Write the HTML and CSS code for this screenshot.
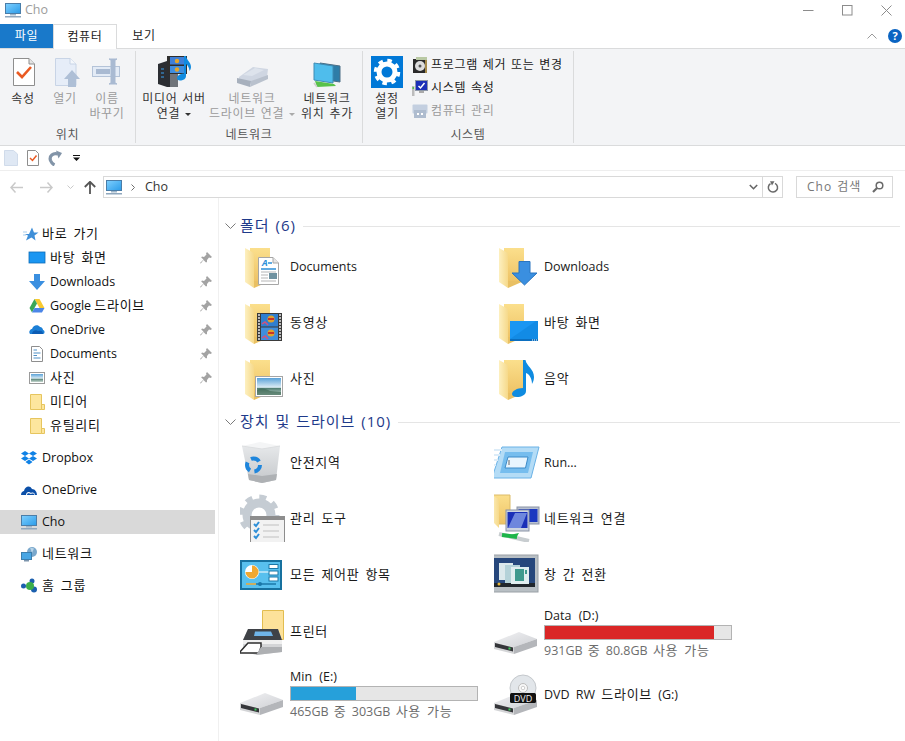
FILE: index.html
```html
<!DOCTYPE html>
<html lang="ko">
<head>
<meta charset="utf-8">
<title>Cho</title>
<link rel="stylesheet" href="styles.css">
</head>
<body>
<svg class="defs" aria-hidden="true">
  <defs>
    <linearGradient id="gFolder" x1="0" y1="0" x2="0" y2="1"><stop offset="0" stop-color="#fbdf8c"/><stop offset="1" stop-color="#eec366"/></linearGradient>
    <linearGradient id="gFlap" x1="0" y1="0" x2="1" y2="0"><stop offset="0" stop-color="#fdf0c0"/><stop offset="1" stop-color="#f6d98a"/></linearGradient>
    <linearGradient id="gScreen" x1="0" y1="0" x2="1" y2="1"><stop offset="0" stop-color="#7fd0ff"/><stop offset="1" stop-color="#2a9be8"/></linearGradient>
    <linearGradient id="gHdd" x1="0" y1="0" x2="1" y2="1"><stop offset="0" stop-color="#f2f2f4"/><stop offset="1" stop-color="#cfd1d5"/></linearGradient>
    <linearGradient id="gBin" x1="0" y1="0" x2="0" y2="1"><stop offset="0" stop-color="#e6e8ea"/><stop offset="1" stop-color="#c4c7ca"/></linearGradient>
    <linearGradient id="gSky" x1="0" y1="0" x2="0" y2="1"><stop offset="0" stop-color="#5aa2d8"/><stop offset=".55" stop-color="#dcecf4"/><stop offset=".6" stop-color="#4f7d70"/><stop offset="1" stop-color="#c8d8d0"/></linearGradient>

    <symbol id="pc" viewBox="0 0 16 16"><rect x="0.5" y="1.5" width="15" height="10" fill="url(#gScreen)" stroke="#4a7da8"/><rect x="5" y="12" width="6" height="1.5" fill="#9fb6c9"/><rect x="0" y="14" width="16" height="1.5" fill="#8fa7bd"/></symbol>

    <symbol id="bigfolder" viewBox="0 0 48 48">
      <path d="M10 6H30V39H10Z" fill="url(#gFolder)"/>
      <path d="M5 6L14 11V46L5 40Z" fill="url(#gFlap)"/>
      <path d="M14 46L30 39H14Z" fill="#e9c063"/>
    </symbol>

    <symbol id="ovDoc" viewBox="0 0 48 48">
      <path d="M18.500 15.500H33L38.500 21V42.500H18.500Z" fill="#fff" stroke="#a6a6a6"/><path d="M33 15.500V21H38.500" fill="#e6e6e6" stroke="#a6a6a6"/>
      <text class="ovtext" x="22" y="24">A</text>
      <path d="M28 21H32M21 27H36" stroke="#2d8fd8" stroke-width="1.500"/>
      <path d="M21 30H36M21 33H28M21 36H28M21 39H36" stroke="#b5b5b5"/>
      <rect x="29" y="31" width="8" height="6" fill="#6f92a0"/>
    </symbol>
    <symbol id="ovFilm" viewBox="0 0 48 48">
      <rect x="17" y="15" width="25" height="28" fill="#3b3b3b"/>
      <rect x="21" y="16" width="17" height="12.500" fill="#2f7fd0"/><rect x="21" y="29.500" width="17" height="12.500" fill="#3f8edc"/>
      <circle cx="31" cy="21" r="3.500" fill="#e0a22b"/><path d="M28 21h6" stroke="#c8322a" stroke-width="2"/><circle cx="31" cy="35" r="3.500" fill="#e0a22b"/><path d="M28 35h6" stroke="#c8322a" stroke-width="2"/>
      <path d="M22 26l3-2 3 3M22 40l3-2 3 3" stroke="#d8507a" stroke-width="1.500" fill="none"/>
      <path d="M18 17h2M18 20h2M18 23h2M18 26h2M18 29h2M18 32h2M18 35h2M18 38h2M18 41h2M39 17h2M39 20h2M39 23h2M39 26h2M39 29h2M39 32h2M39 35h2M39 38h2M39 41h2" stroke="#e8e8e8" stroke-width="1.500"/>
    </symbol>
    <symbol id="ovPhoto" viewBox="0 0 48 48">
      <rect x="15.500" y="22.500" width="27" height="20" fill="#fff" stroke="#a5a5a5"/><rect x="17" y="24" width="24" height="17" fill="url(#gSky)"/><path d="M17 36c5-3 9-1 13 1l11 1v3H17Z" fill="#3f6a55" opacity=".7"/>
    </symbol>
    <symbol id="ovDown" viewBox="0 0 48 48"><path d="M25 19.500H36V31H43L30.500 43 18 31H25Z" fill="#3a8fe0" stroke="#2a75c0"/></symbol>
    <symbol id="ovDesk" viewBox="0 0 48 48"><rect x="16" y="23" width="28" height="20" fill="#1a96f2"/><path d="M16 41L42 23H44V43H16Z" fill="#0d84dc" opacity=".6"/><rect x="16" y="41" width="28" height="2" fill="#0b6fc0"/><path d="M38 42h1M40 42h1M42 42h1" stroke="#fff"/></symbol>
    <symbol id="ovMusic" viewBox="0 0 48 48"><path d="M29 6h2.500c1 6 8.500 9 8.500 17 0 3-1 5-2 7 0-6-3-10-6-11V37c0 4-5 6-9 6-3 0-5-1-5-3 0-3 5-6 11-6Z" fill="#0f8be0"/></symbol>

    <symbol id="bin" viewBox="0 0 48 48">
      <path d="M2 8L9 42 22 45 36 42 40 8Z" fill="url(#gBin)"/>
      <path d="M2 8L20 4 40 8 22 11Z" fill="#f4f5f6"/>
      <path d="M2 8L22 11 40 8" fill="none" stroke="#dcdee0"/>
      <path d="M8 36L22 38 37 36 36 42 22 45 9 42Z" fill="#aeb1b4"/>
      <circle cx="13.500" cy="27" r="6.500" fill="none" stroke="#1f86dc" stroke-width="4" stroke-dasharray="9 4.600"/>
    </symbol>
    <symbol id="admin" viewBox="0 0 48 48">
      <circle cx="19" cy="21" r="12" fill="none" stroke="#c5ccd3" stroke-width="9"/><circle cx="19" cy="21" r="18" fill="none" stroke="#c5ccd3" stroke-width="5" stroke-dasharray="7 7.100"/>
      <rect x="10.500" y="16.500" width="34" height="26" fill="#f2f2f2" stroke="#8d8d8d" transform="translate(0 6)"/>
      <rect x="10" y="22" width="35" height="4" fill="#8d8d8d"/>
      <path d="M14 31l2 2 3-4M14 37l2 2 3-4M14 43l2 2 3-4" transform="translate(0 -1)" stroke="#2d8fd8" stroke-width="2" fill="none"/>
      <path d="M23 31H39M23 37H39M23 43H39" stroke="#c0c0c0"/>
    </symbol>
    <symbol id="cpl" viewBox="0 0 48 48">
      <rect x="0" y="10" width="42" height="30" fill="#17719f"/><rect x="2" y="12" width="38" height="26" fill="#58c0ee"/>
      <circle cx="12" cy="22" r="7" fill="#fff"/><path d="M12 22V15.500a6.500 6.500 0 1 1-6.500 6.500Z" fill="#f0a830"/>
      <path d="M19 22H29" stroke="#fff"/>
      <rect x="29" y="14.500" width="9" height="4" fill="#fff" stroke="#1b78a8"/><rect x="29" y="21" width="9" height="4" fill="#fff" stroke="#1b78a8"/><rect x="29" y="27" width="9" height="4" fill="#fff" stroke="#1b78a8"/>
      <path d="M6 34H16" stroke="#f0a830" stroke-width="1.500"/><path d="M16 34H36" stroke="#1b78a8" stroke-width="1.500"/><circle cx="20" cy="34" r="2" fill="#1b78a8"/>
    </symbol>
    <symbol id="printer" viewBox="0 0 48 48">
      <path d="M22.500 1.500H43.500V30.500H22.500Z" fill="#fde29a" stroke="#e2bd50"/>
      <path d="M3 31L8 20H38L42 31V43L16 46 3 42Z" fill="#d4d5d7"/>
      <path d="M3 31L8 20H38L42 31Z" fill="#3f4247"/>
      <path d="M15 22.500H31L33 27H14Z" fill="#6fb4e8"/>
      <path d="M3 31H42V35H3Z" fill="#f0f0f0"/>
      <path d="M8 34H21V38L19 44H-1Z" fill="#fff" stroke="#2e2e2e" stroke-width="1.500"/>
      <path d="M21 38H42V43L16 46Z" fill="#aeb0b3"/>
    </symbol>
    <symbol id="hdd" viewBox="0 0 48 48">
      <path d="M0 33L25 23 43 30 20 38Z" fill="url(#gHdd)"/>
      <path d="M20 38L43 30V37L20 45Z" fill="#b4b6ba"/>
      <path d="M0 33L20 38V45L0 40Z" fill="#d4d5d7"/>
      <path d="M1 34L19 38.500V42.500L1 38Z" fill="#35363a"/>
      <rect x="14.500" y="38.500" width="2" height="2" fill="#3ecf5e"/>
    </symbol>
    <symbol id="run" viewBox="0 0 48 48">
      <path d="M8 9H45L37 40H-2Z" fill="#b4dcf6" stroke="#6ab2e6"/>
      <path d="M11 14H39L34 35H6Z" fill="#76bdee"/><path d="M14 19H34L31.500 30H11Z" fill="#e8f5fe" stroke="#3c8bc8"/>
      <path d="M-4 12H8M-4 17H6M-4 22H4M-4 27H2" stroke="#dcecf8" stroke-width="2"/>
      <path d="M15 22v5" stroke="#666"/>
    </symbol>
    <symbol id="netconn" viewBox="0 0 48 48">
      <g transform="translate(-3 0)">
      <path d="M0 1H19V30H8L0 24Z" fill="url(#gFolder)" stroke="#dcbb68"/><path d="M0 1L8 5V34L0 26Z" fill="url(#gFlap)"/>
      <rect x="26" y="13" width="22" height="17" fill="#b8c0d0" stroke="#8a93a5"/><rect x="27.500" y="15" width="19" height="13" fill="#1b38c0"/>
      <rect x="15" y="16" width="23" height="21" fill="#ccd4e0" stroke="#8a93a5"/><rect x="16.500" y="18" width="20" height="16" fill="#1a30b8"/><path d="M17 34L24 19H36L30 34Z" fill="#8ba4ea" opacity=".75"/>
      <path d="M8 40L38 47" stroke="#c8cdd0" stroke-width="4"/><path d="M14 42L28 39 25 44Z" fill="#1db54a"/><path d="M11 41L26 43" stroke="#1db54a" stroke-width="4"/>
      </g>
    </symbol>
    <symbol id="flip" viewBox="0 0 48 48">
      <g transform="translate(-3 0)">
      <rect x="0" y="5" width="47" height="37" fill="#b8bfc4" stroke="#9aa0a6"/><rect x="3" y="8" width="41" height="29" fill="#26477c"/>
      <rect x="3" y="33" width="41" height="4" fill="#20262c"/>
      <rect x="8" y="13" width="14" height="17" fill="#dce9ec"/><rect x="14" y="15" width="15" height="18" fill="#b4d2d8"/><rect x="20" y="17" width="18" height="17" fill="#e0eef0"/><rect x="24" y="19" width="9" height="12" fill="#3f9a8e"/><rect x="34" y="20" width="2" height="4" fill="#3f9a8e"/>
      <circle cx="8" cy="34" r="1.500" fill="#e8b83a"/>
      </g>
    </symbol>
    <symbol id="dvd" viewBox="0 0 48 48">
      <use href="#hdd" width="48" height="48"/>
      <circle cx="29" cy="18" r="13" fill="#e2e6ea" stroke="#c4c8cc"/><circle cx="29" cy="18" r="4.500" fill="#f8f8f8" stroke="#bcbcbc"/><circle cx="29" cy="18" r="1.800" fill="#fff" stroke="#ccc"/>
      <rect x="16" y="23" width="26" height="10" rx="1.500" fill="#111"/>
      <text class="dvdtext" x="29" y="31.500" text-anchor="middle">DVD</text>
    </symbol>
    <symbol id="pin" viewBox="0 0 12 12"><path d="M7 0L12 5 10.500 6 9 5.500 7 8 7 10 6 10.500 3.500 8 .8 11.500 0 11 3.500 7.500 1.200 5.500 2 4.500 4 5 6.500 2.500 6 1.500Z" fill="#a3a3a3"/></symbol>
    <symbol id="minifolder" viewBox="0 0 16 16"><path d="M1.500.5H12.500V15.500H1.500Z" fill="#fde69e" stroke="#e6c55e"/><path d="M12.500 10.500H15.500V15.500H12.500Z" fill="#fde69e" stroke="#e6c55e"/></symbol>
  </defs>
</svg>

<header class="titlebar">
  <svg class="ic16" viewBox="0 0 16 16"><use href="#pc"/></svg>
  <span class="title">Cho</span>
  <div class="winctl">
    <svg class="winbtn" viewBox="0 0 11 11"><path d="M0 5.500H10.500" stroke="#8c8c8c"/></svg>
    <svg class="winbtn" viewBox="0 0 11 11"><rect x=".5" y=".5" width="9.500" height="9.500" fill="none" stroke="#8c8c8c"/></svg>
    <svg class="winbtn" viewBox="0 0 11 11"><path d="M.5 .5L10.500 10.500M10.500 .5L.5 10.500" stroke="#8c8c8c"/></svg>
  </div>
</header>

<nav class="tabs">
  <span class="tab tab-file ko">파일</span>
  <span class="tab tab-on ko">컴퓨터</span>
  <span class="tab tab-off ko">보기</span>
  <div class="tabs-right">
    <svg class="chev-up" viewBox="0 0 10 6"><path d="M.5 5.500L5 1 9.500 5.500" fill="none" stroke="#9a9a9a"/></svg>
    <span class="help">?</span>
  </div>
</nav>

<section class="ribbon">
  <div class="group g-loc">
    <div class="btns">
      <div class="rbtn w46">
        <svg class="ric" viewBox="0 0 32 32"><path d="M6.500 2.500H22L27.500 8V29.500H6.500Z" fill="#fff" stroke="#8e8e8e"/><path d="M22 2.500V8H27.500" fill="#e4e4e4" stroke="#8e8e8e"/><path d="M10 16L15 21 24 11" fill="none" stroke="#ea5a22" stroke-width="2.600"/></svg>
        <span class="ko">속성</span>
      </div>
      <div class="rbtn w38 off">
        <svg class="ric" viewBox="0 0 32 32"><path d="M6.500 2.500H21L27 8V29.500H6.500Z" fill="#e6edf8" stroke="#c8d4e6"/><path d="M21 2.500V8H27" fill="#f4f7fb" stroke="#c8d4e6"/><path d="M23 14L31 23H27V31H19V23H15Z" fill="#aebfd6"/></svg>
        <span class="ko">열기</span>
      </div>
      <div class="rbtn w46 off">
        <svg class="ric" viewBox="0 0 32 32"><rect x="1.500" y="10.500" width="27" height="10" fill="#e3ebf6" stroke="#b4c3d8"/><rect x="5" y="13" width="14" height="5" fill="#a9bad2"/><path d="M18 3h8l-2 1v23l2 1h-8l2-1V4Z" fill="#a9bad2" stroke="#a9bad2"/></svg>
        <span class="ko">이름<br>바꾸기</span>
      </div>
    </div>
    <div class="glabel ko">위치</div>
  </div>
  <div class="group g-net">
    <div class="btns">
      <div class="rbtn w76">
        <svg class="ric" viewBox="0 0 32 32">
          <path d="M0 8L9 5 19 7V31L9 31 0 28Z" fill="#2b2e33"/><path d="M12 8L20 7V31L12 31Z" fill="#70747a"/><path d="M3 13h3M3 17h3M3 21h3" stroke="#3aa0f0"/>
          <rect x="9" y="0" width="20" height="18" fill="#2e2e2e"/><rect x="12" y="1" width="14" height="7.500" fill="#3f7fd8"/><rect x="12" y="10" width="14" height="7" fill="#3f8ee0"/><circle cx="19" cy="5" r="2.200" fill="#e5a52a"/><circle cx="19" cy="13.500" r="2.200" fill="#e5a52a"/>
          <path d="M26 0h2c.5 4 5 6 5 11 0 2-1 3-1.500 4 0-3-2-6-3.500-7V20c0 3-3 4.500-6 4.500-2 0-3-1-3-2.500 0-2.500 4-4.500 7-4.500Z" fill="#0f8be0"/>
        </svg>
        <span class="ko">미디어 서버<br>연결 <i class="caret"></i></span>
      </div>
      <div class="rbtn w80 off">
        <svg class="ric" viewBox="0 0 32 32"><path d="M3 21L17 11 32 13 31 21 15 28 3 25Z" fill="#cfd6e2"/><path d="M1 22L15 25 14 31 1 27Z" fill="#a7b0bd"/><path d="M15 25L32 19V23L14 31Z" fill="#b9c1cd"/><path d="M7 19L19 12 28 14 16 20Z" fill="#dde3ec"/></svg>
        <span class="ko">네트워크<br>드라이브 연결 <i class="caret caret-off"></i></span>
      </div>
      <div class="rbtn w70">
        <svg class="ric" viewBox="0 0 32 32"><path d="M9 7L29 10V26L9 23Z" fill="#2e7da8" stroke="#4c6f86"/><path d="M3 7L22 10V27L3 24Z" fill="#4fbdec" stroke="#3f8cb4"/><path d="M4 25L23 28 25 30 6 31Z" fill="#58c24a"/><path d="M3 27L6 31" stroke="#d0d0d0" stroke-width="1.500"/></svg>
        <span class="ko">네트워크<br>위치 추가</span>
      </div>
    </div>
    <div class="glabel ko">네트워크</div>
  </div>
  <div class="group g-sys">
    <div class="btns">
      <div class="rbtn w48">
        <svg class="ric" viewBox="0 0 32 32"><rect width="32" height="32" fill="#0078d7"/><circle cx="16" cy="16" r="8" fill="none" stroke="#fff" stroke-width="5"/><circle cx="16" cy="16" r="11.500" fill="none" stroke="#fff" stroke-width="3.500" stroke-dasharray="4.500 4.530"/></svg>
        <span class="ko">설정<br>열기</span>
      </div>
      <div class="smallist">
        <div class="sitem">
          <svg class="ic16" viewBox="0 0 16 16"><rect x="1" y="2" width="14" height="14" fill="#2a2a2a"/><rect x="4" y="0" width="11" height="3" fill="#b9c9a4"/><circle cx="8" cy="9" r="5" fill="#ddd"/><circle cx="8" cy="9" r="1.500" fill="#555"/><rect x="13" y="3" width="2" height="13" fill="#a58a4c"/></svg>
          <span class="ko">프로그램 제거 또는 변경</span>
        </div>
        <div class="sitem">
          <svg class="ic16" viewBox="0 0 16 16"><rect x="3.500" y=".5" width="12" height="10" fill="#1a2fb8" stroke="#8d97a8"/><path d="M6.500 6L8.500 8 12.500 3" fill="none" stroke="#fff" stroke-width="1.500"/><rect x="7" y="11" width="5" height="2" fill="#aaa"/><rect x="0" y="6" width="2.500" height="10" fill="#bcbcbc"/><rect x=".5" y="7" width="1.500" height="2" fill="#54c24a"/></svg>
          <span class="ko">시스템 속성</span>
        </div>
        <div class="sitem off">
          <svg class="ic16" viewBox="0 0 16 16"><rect x=".5" y="1.500" width="15" height="9" rx="1" fill="#c3cfe0"/><rect x="2" y="7" width="12" height="8" fill="#aebccf"/><rect x="5" y="10" width="2" height="2" fill="#fff"/><rect x="9" y="10" width="2" height="2" fill="#fff"/></svg>
          <span class="ko">컴퓨터 관리</span>
        </div>
      </div>
    </div>
    <div class="glabel ko">시스템</div>
  </div>
</section>

<div class="qat">
  <svg class="ic14" viewBox="0 0 14 16"><path d="M.5 .5H9.500L13.500 4V15.500H.5Z" fill="#dfe8f4" stroke="#d0dbea"/></svg>
  <svg class="ic14" viewBox="0 0 14 16"><path d="M1.500 .5H9.500L12.500 3.500V15.500H1.500Z" fill="#fff" stroke="#8e8e8e"/><path d="M4 8L6.500 10.500 10.500 5.500" fill="none" stroke="#ea5a22" stroke-width="1.500"/></svg>
  <svg class="ic14" viewBox="0 0 14 16"><path d="M10 4C5 2.500 1 6 2.500 10.500 3.300 12.500 4.500 14 6.500 15" fill="none" stroke="#8294a8" stroke-width="3.200"/><path d="M8 .5L14 3 10.500 8.500Z" fill="#8294a8"/></svg>
  <svg class="qdrop" viewBox="0 0 7 6"><path d="M0 0H7V1H0ZM0 2.500H7L3.500 6Z" fill="#111"/></svg>
</div>

<div class="navbar">
  <svg class="nav-arrow" viewBox="0 0 13 11"><path d="M5.500 .5L1 5.500 5.500 10.500M1 5.500H13" fill="none" stroke="#c9c9c9" stroke-width="1.500"/></svg>
  <svg class="nav-arrow" viewBox="0 0 13 11"><path d="M7.500 .5L12 5.500 7.500 10.500M12 5.500H0" fill="none" stroke="#c9c9c9" stroke-width="1.500"/></svg>
  <svg class="nav-down" viewBox="0 0 7 4"><path d="M.5 .5L3.500 3.500 6.500 .5" fill="none" stroke="#c9c9c9"/></svg>
  <svg class="nav-up" viewBox="0 0 12 13"><path d="M.8 6L6 .8 11.200 6M6 1V13" fill="none" stroke="#555" stroke-width="1.800"/></svg>
  <div class="addr">
    <svg class="ic16" viewBox="0 0 16 16"><use href="#pc"/></svg>
    <svg class="crumb" viewBox="0 0 4 7"><path d="M.5 .5L3.500 3.500 .5 6.500" fill="none" stroke="#6e6e6e"/></svg>
    <span class="addr-text">Cho</span>
    <svg class="addr-drop" viewBox="0 0 9 6"><path d="M.8 1L4.500 4.700 8.200 1" fill="none" stroke="#666" stroke-width="1.600"/></svg>
    <span class="addr-refresh">
      <svg class="ic10" viewBox="0 0 12 12"><path d="M3.500 2.600A4.600 4.600 0 1 0 8 2.400" fill="none" stroke="#6a6a6a" stroke-width="1.500"/><path d="M3 .2H7.500L5 4.500Z" fill="#6a6a6a"/></svg>
    </span>
  </div>
  <div class="search">
    <span class="search-text ko">Cho 검색</span>
    <svg class="ic12" viewBox="0 0 12 12"><circle cx="7.500" cy="4.500" r="3.300" fill="none" stroke="#6a6a6a" stroke-width="1.500"/><path d="M5 7L1 11" stroke="#6a6a6a" stroke-width="2.200"/></svg>
  </div>
</div>

<main class="main">
  <aside class="side">
    <ul class="tree">
      <li class="head"><svg class="ic16" viewBox="0 0 16 16"><path d="M9 1.500L11 6.500H15.500L11.500 9.500 12.500 14.500 8.500 11.500 3 14.500 5 9.500 1.500 8H6Z" fill="#3f8fd8"/><path d="M0 6H4M0 9H3" stroke="#a8cdec"/></svg><span class="ko lift">바로 가기</span></li>
      <li class="sub"><svg class="ic16" viewBox="0 0 16 16"><rect y="2" width="16" height="11" fill="#1a96f2" stroke="#0e6db8" stroke-width=".8"/></svg><span class="ko lift">바탕 화면</span><svg class="ic12 pin" viewBox="0 0 12 12"><use href="#pin"/></svg></li>
      <li class="sub"><svg class="ic16" viewBox="0 0 16 16"><path d="M5 0H11V7H16L8 16 0 7H5Z" fill="#3a8fe0"/></svg>Downloads<svg class="ic12 pin" viewBox="0 0 12 12"><use href="#pin"/></svg></li>
      <li class="sub"><svg class="ic16" viewBox="0 0 16 16"><path d="M5.500 1H10.500L15.500 10H10.500Z" fill="#f8c930"/><path d="M5.500 1L.5 10 3 14.500 8 5.500Z" fill="#3aa757"/><path d="M3 14.500H13L15.500 10H5.500Z" fill="#4b86e8"/></svg><span class="lift">Google <span class="ko">드라이브</span></span><svg class="ic12 pin" viewBox="0 0 12 12"><use href="#pin"/></svg></li>
      <li class="sub"><svg class="ic16" viewBox="0 0 16 16"><path d="M1 12C-1 9 2 7 3 7 4 3 9 2 11 5 13 5 14 7 14 8 16 8 16 12 14 12Z" fill="#1b7fd6"/><path d="M3 12C3 9 7 7 9 9 12 8 14 9 14 12Z" fill="#0c5cb4"/></svg>OneDrive<svg class="ic12 pin" viewBox="0 0 12 12"><use href="#pin"/></svg></li>
      <li class="sub"><svg class="ic16" viewBox="0 0 16 16"><path d="M2.500 .5H10.500L13.500 3.500V15.500H2.500Z" fill="#fff" stroke="#8e8e8e"/><path d="M4.500 4H8M4.500 7H11.500M4.500 9.500H8M4.500 12H11.500" stroke="#4f8fc4"/></svg>Documents<svg class="ic12 pin" viewBox="0 0 12 12"><use href="#pin"/></svg></li>
      <li class="sub"><svg class="ic16" viewBox="0 0 16 16"><rect x=".5" y="2.500" width="15" height="11" fill="#fff" stroke="#9a9a9a"/><rect x="2" y="4" width="12" height="8" fill="url(#gSky)"/></svg><span class="ko lift">사진</span><svg class="ic12 pin" viewBox="0 0 12 12"><use href="#pin"/></svg></li>
      <li class="sub"><svg class="ic16" viewBox="0 0 16 16"><use href="#minifolder"/></svg><span class="ko lift">미디어</span></li>
      <li class="sub"><svg class="ic16" viewBox="0 0 16 16"><use href="#minifolder"/></svg><span class="ko lift">유틸리티</span></li>
      <li class="head gap"><svg class="ic16" viewBox="0 0 16 16"><path d="M4 1L8 3.500 4 6 0 3.500ZM12 1L16 3.500 12 6 8 3.500ZM4 6L8 8.500 4 11 0 8.500ZM12 6L16 8.500 12 11 8 8.500ZM8 9.500L11.500 12 8 14.500 4.500 12Z" fill="#0f82e6"/></svg>Dropbox</li>
      <li class="head"><svg class="ic16" viewBox="0 0 16 16"><path d="M0 13C0 10 2 9 3 9 4 4 9 3 11 7 14 7 16 10 16 13Z" fill="#0b4fa8"/><path d="M5 13C5 10 8 9 10 11 12 10 14 11 14 13Z" fill="#fff"/><path d="M6 13C6 11 8 10.500 10 12 12 11 13.500 12 13.500 13Z" fill="#0b4fa8"/></svg>OneDrive</li>
      <li class="head selected"><svg class="ic16" viewBox="0 0 16 16"><use href="#pc"/></svg>Cho</li>
      <li class="head"><svg class="ic16" viewBox="0 0 16 16"><circle cx="11" cy="6" r="5" fill="#7aa8cc"/><path d="M9 1.500L13 2.500 11 7Z" fill="#b9d4e8"/><rect x=".5" y="6.500" width="10" height="7" fill="#48a6e4" stroke="#3c7fae"/><rect x="3" y="14" width="5" height="1.500" fill="#7d95ad"/></svg><span class="ko lift">네트워크</span></li>
      <li class="head"><svg class="ic16" viewBox="0 0 16 16"><circle cx="2.500" cy="8" r="2.500" fill="#1b5fae"/><circle cx="11" cy="3" r="2.500" fill="#1b5fae"/><circle cx="13" cy="11.500" r="3" fill="#1b5fae"/><circle cx="9" cy="8" r="4" fill="#3cae4a"/></svg><span class="ko lift">홈 그룹</span></li>
    </ul>
  </aside>

  <div class="content">
    <h2 class="sec"><svg class="sec-chev" viewBox="0 0 11 6"><path d="M.5 .5L5.500 5.500 10.500 .5" fill="none" stroke="#7a7a7a"/></svg><span class="sec-title">폴더 (6)</span><i class="rule"></i></h2>
    <div class="tiles">
      <div class="tile"><svg class="tic" viewBox="0 0 48 48"><use href="#bigfolder"/><use href="#ovDoc"/></svg><span>Documents</span></div>
      <div class="tile"><svg class="tic" viewBox="0 0 48 48"><use href="#bigfolder"/><use href="#ovDown"/></svg><span>Downloads</span></div>
      <div class="tile"><svg class="tic" viewBox="0 0 48 48"><use href="#bigfolder"/><use href="#ovFilm"/></svg><span class="ko">동영상</span></div>
      <div class="tile"><svg class="tic" viewBox="0 0 48 48"><use href="#bigfolder"/><use href="#ovDesk"/></svg><span class="ko">바탕 화면</span></div>
      <div class="tile"><svg class="tic" viewBox="0 0 48 48"><use href="#bigfolder"/><use href="#ovPhoto"/></svg><span class="ko">사진</span></div>
      <div class="tile"><svg class="tic" viewBox="0 0 48 48"><use href="#bigfolder"/><use href="#ovMusic"/></svg><span class="ko">음악</span></div>
    </div>
    <h2 class="sec sec2"><svg class="sec-chev" viewBox="0 0 11 6"><path d="M.5 .5L5.500 5.500 10.500 .5" fill="none" stroke="#7a7a7a"/></svg><span class="sec-title">장치 및 드라이브 (10)</span><i class="rule"></i></h2>
    <div class="tiles">
      <div class="tile"><svg class="tic" viewBox="0 0 48 48"><use href="#bin"/></svg><span class="ko">안전지역</span></div>
      <div class="tile"><svg class="tic" viewBox="0 0 48 48"><use href="#run"/></svg><span>Run...</span></div>
      <div class="tile"><svg class="tic" viewBox="0 0 48 48"><use href="#admin"/></svg><span class="ko">관리 도구</span></div>
      <div class="tile"><svg class="tic" viewBox="0 0 48 48"><use href="#netconn"/></svg><span class="ko">네트워크 연결</span></div>
      <div class="tile"><svg class="tic" viewBox="0 0 48 48"><use href="#cpl"/></svg><span class="ko">모든 제어판 항목</span></div>
      <div class="tile"><svg class="tic" viewBox="0 0 48 48"><use href="#flip"/></svg><span class="ko">창 간 전환</span></div>
      <div class="tile tall"><svg class="tic" viewBox="0 0 48 48"><use href="#printer"/></svg><span class="ko">프린터</span></div>
      <div class="tile tall">
        <svg class="tic" viewBox="0 0 48 48"><use href="#hdd"/></svg>
        <div class="drive">
          <span class="drive-name">Data (D:)</span>
          <div class="bar"><div class="fill fill-red" style="width:91%"></div></div>
          <span class="sub-text">931GB <span class="ko">중</span> 80.8GB <span class="ko">사용 가능</span></span>
        </div>
      </div>
      <div class="tile tall">
        <svg class="tic" viewBox="0 0 48 48"><use href="#hdd"/></svg>
        <div class="drive">
          <span class="drive-name">Min (E:)</span>
          <div class="bar"><div class="fill fill-blue" style="width:35%"></div></div>
          <span class="sub-text">465GB <span class="ko">중</span> 303GB <span class="ko">사용 가능</span></span>
        </div>
      </div>
      <div class="tile tall"><svg class="tic" viewBox="0 0 48 48"><use href="#dvd"/></svg><span class="dvd-name">DVD RW <span class="ko">드라이브</span> (G:)</span></div>
    </div>
  </div>
</main>
</body>
</html>
```
FILE: styles.css
```css
* { box-sizing: border-box; }
html, body { margin: 0; padding: 0; }
body {
  width: 905px;
  height: 741px;
  overflow: hidden;
  background: #fff;
  color: #1a1a1a;
  font-family: "Open Sans", "Noto Sans CJK KR", sans-serif;
  font-size: 12.5px;
  line-height: 16px;
}
.ko { font-size: 12px; letter-spacing: .7px; word-spacing: 1px; }
.side .ko, .content .ko { font-size: 13px; letter-spacing: .7px; word-spacing: 2px; }
.lift { margin-bottom: 2px; }
.defs { display: block; width: 0; height: 0; overflow: hidden; }
.ic16 { width: 16px; height: 16px; flex: none; display: block; overflow: visible; }
.ic14 { width: 14px; height: 16px; flex: none; display: block; }
.ic12 { width: 12px; height: 12px; flex: none; display: block; }
.ic10 { width: 12px; height: 12px; display: block; }

/* title bar */
.titlebar { display: flex; align-items: center; height: 24px; padding: 0 0 4px 5px; }
.title { margin-left: 4px; color: #9c9c9c; }
.winctl { display: flex; margin-left: auto; gap: 28px; padding-right: 13px; }
.winbtn { width: 11px; height: 11px; display: block; }

/* tabs */
.tabs { display: flex; height: 24px; align-items: stretch; }
.tab { display: flex; align-items: center; justify-content: center; }
.tab-file { width: 53px; background: #1979ca; color: #fff; }
.tab-on { width: 64px; border: 1px solid #dadbdc; border-bottom: 0; background: #fff; height: 25px; position: relative; z-index: 1; }
.tab-off { width: 54px; }
.tabs-right { display: flex; align-items: center; gap: 11px; margin-left: auto; padding: 0 3px 0 0; }
.chev-up { width: 10px; height: 6px; }
.help { width: 14px; height: 14px; border-radius: 50%; background: #0a64c2; color: #fff; font-size: 11px; font-weight: 700; line-height: 14px; text-align: center; }

/* ribbon */
.ribbon { display: flex; height: 98px; background: #f3f4f6; border-top: 1px solid #dadbdc; border-bottom: 1px solid #dadbdc; padding-top: 2px; }
.group { display: flex; flex-direction: column; height: 92px; border-right: 1px solid #dadbdc; }
.g-loc { width: 136px; }
.g-net { width: 227px; }
.g-sys { width: 211px; }
.btns { display: flex; height: 76px; flex: none; }
.rbtn { display: flex; flex-direction: column; align-items: center; padding-top: 5px; text-align: center; line-height: 15px; white-space: nowrap; color: #333; }
.ric { width: 32px; height: 32px; display: block; overflow: visible; margin-bottom: 2px; flex: none; }
.rbtn > span { display: block; margin-top: 1px; }
.w46 { width: 46px; }
.w38 { width: 38px; }
.w76 { width: 76px; }
.w80 { width: 80px; }
.w70 { width: 70px; }
.w48 { width: 48px; }
.off { color: #9b9b9b; }
.glabel { text-align: center; color: #555; }
.caret { display: inline-block; width: 0; height: 0; border: 3px solid transparent; border-top: 3px solid #333; border-bottom: 0; vertical-align: middle; }
.caret-off { border-top-color: #aaa; }
.smallist { display: flex; flex-direction: column; padding-top: 6px; margin-left: 1px; gap: 7px; }
.sitem { display: flex; align-items: center; gap: 3px; height: 16px; white-space: nowrap; }

/* quick access */
.qat { display: flex; align-items: center; height: 25px; padding-left: 4px; gap: 8px; border-bottom: 1px solid #eeeeee; }
.qdrop { width: 7px; height: 6px; margin-left: 3px; }

/* nav */
.navbar { display: flex; align-items: center; height: 27px; padding: 5px 0 0 10px; }
.nav-arrow { width: 13px; height: 11px; margin-right: 17px; }
.nav-down { width: 7px; height: 4px; margin-left: -3px; margin-right: 10px; }
.nav-up { width: 12px; height: 13px; margin-right: 7px; }
.addr { display: flex; align-items: center; width: 680px; height: 22px; border: 1px solid #d9d9d9; padding-left: 2px; }
.crumb { width: 4px; height: 7px; margin-left: 9px; }
.addr-text { margin-left: 10px; color: #333; }
.addr-drop { width: 9px; height: 6px; margin-left: auto; margin-right: 4px; }
.addr-refresh { display: flex; align-items: center; justify-content: center; width: 20px; height: 20px; border-left: 1px solid #d9d9d9; }
.search { display: flex; align-items: center; justify-content: space-between; width: 97px; height: 22px; margin-left: 13px; border: 1px solid #d9d9d9; padding: 0 8px 0 10px; }
.search-text { color: #777; white-space: nowrap; letter-spacing: 1px; }

/* main */
.main { display: flex; height: 543px; }
.side { width: 219px; flex: none; border-right: 1px solid #f0f0f0; padding-top: 24px; }
.tree { list-style: none; margin: 0; padding: 0; }
.tree li { display: flex; align-items: center; gap: 5px; white-space: nowrap; color: #111; }
.head { height: 32px; padding-left: 21px; width: 215px; }
.tree .head:first-child { height: 24px; padding-left: 23px; gap: 3px; }
.gap { margin-top: 4px; }
.sub { height: 24px; padding-left: 29px; width: 212px; }
.pin { margin-left: auto; }
.selected { background: #d9d9d9; height: 24px; margin: 4px 0; }
.content { flex: 1; padding-top: 16px; min-width: 0; }
.sec { display: flex; align-items: center; height: 24px; margin: 0; padding-left: 6px; font-size: 15px; font-weight: 400; color: #1e3a8a; gap: 4px; letter-spacing: 1px; word-spacing: 1px; white-space: nowrap; }
.sec2 { margin-top: 4px; }
.sec-title { margin-bottom: 2px; }
.sec-chev { width: 11px; height: 6px; flex: none; }
.rule { flex: 1; height: 1px; background: #e5e5e5; margin: 0 5px 0 3px; }
.tiles { display: grid; grid-template-columns: 254px 254px; padding-left: 21px; }
.tile { display: flex; align-items: center; gap: 2px; height: 56px; white-space: nowrap; }
.tile > span { padding-top: 2px; }
.tile > span.ko { padding-top: 0; margin-bottom: 1px; }
.tall > span.ko { margin-bottom: 4px; }
.tall { height: 61px; }
.tic { width: 48px; height: 48px; flex: none; overflow: visible; display: block; }
.ovtext { font: italic 700 9px "Open Sans", sans-serif; fill: #2d8fd8; }
.dvdtext { font: 400 9px "Open Sans", sans-serif; fill: #eee; }
.drive { display: flex; flex-direction: column; width: 188px; margin-top: 2px; }
.drive-name { word-spacing: 4px; }
.dvd-name { word-spacing: 3px; }
.bar { height: 15px; margin: 1px 0 2px; border: 1px solid #b3b3b3; background: #e6e6e6; }
.fill { height: 100%; }
.fill-red { background: #da2626; }
.fill-blue { background: #26a0da; }
.sub-text { color: #6d6d6d; word-spacing: 2px; }
```
